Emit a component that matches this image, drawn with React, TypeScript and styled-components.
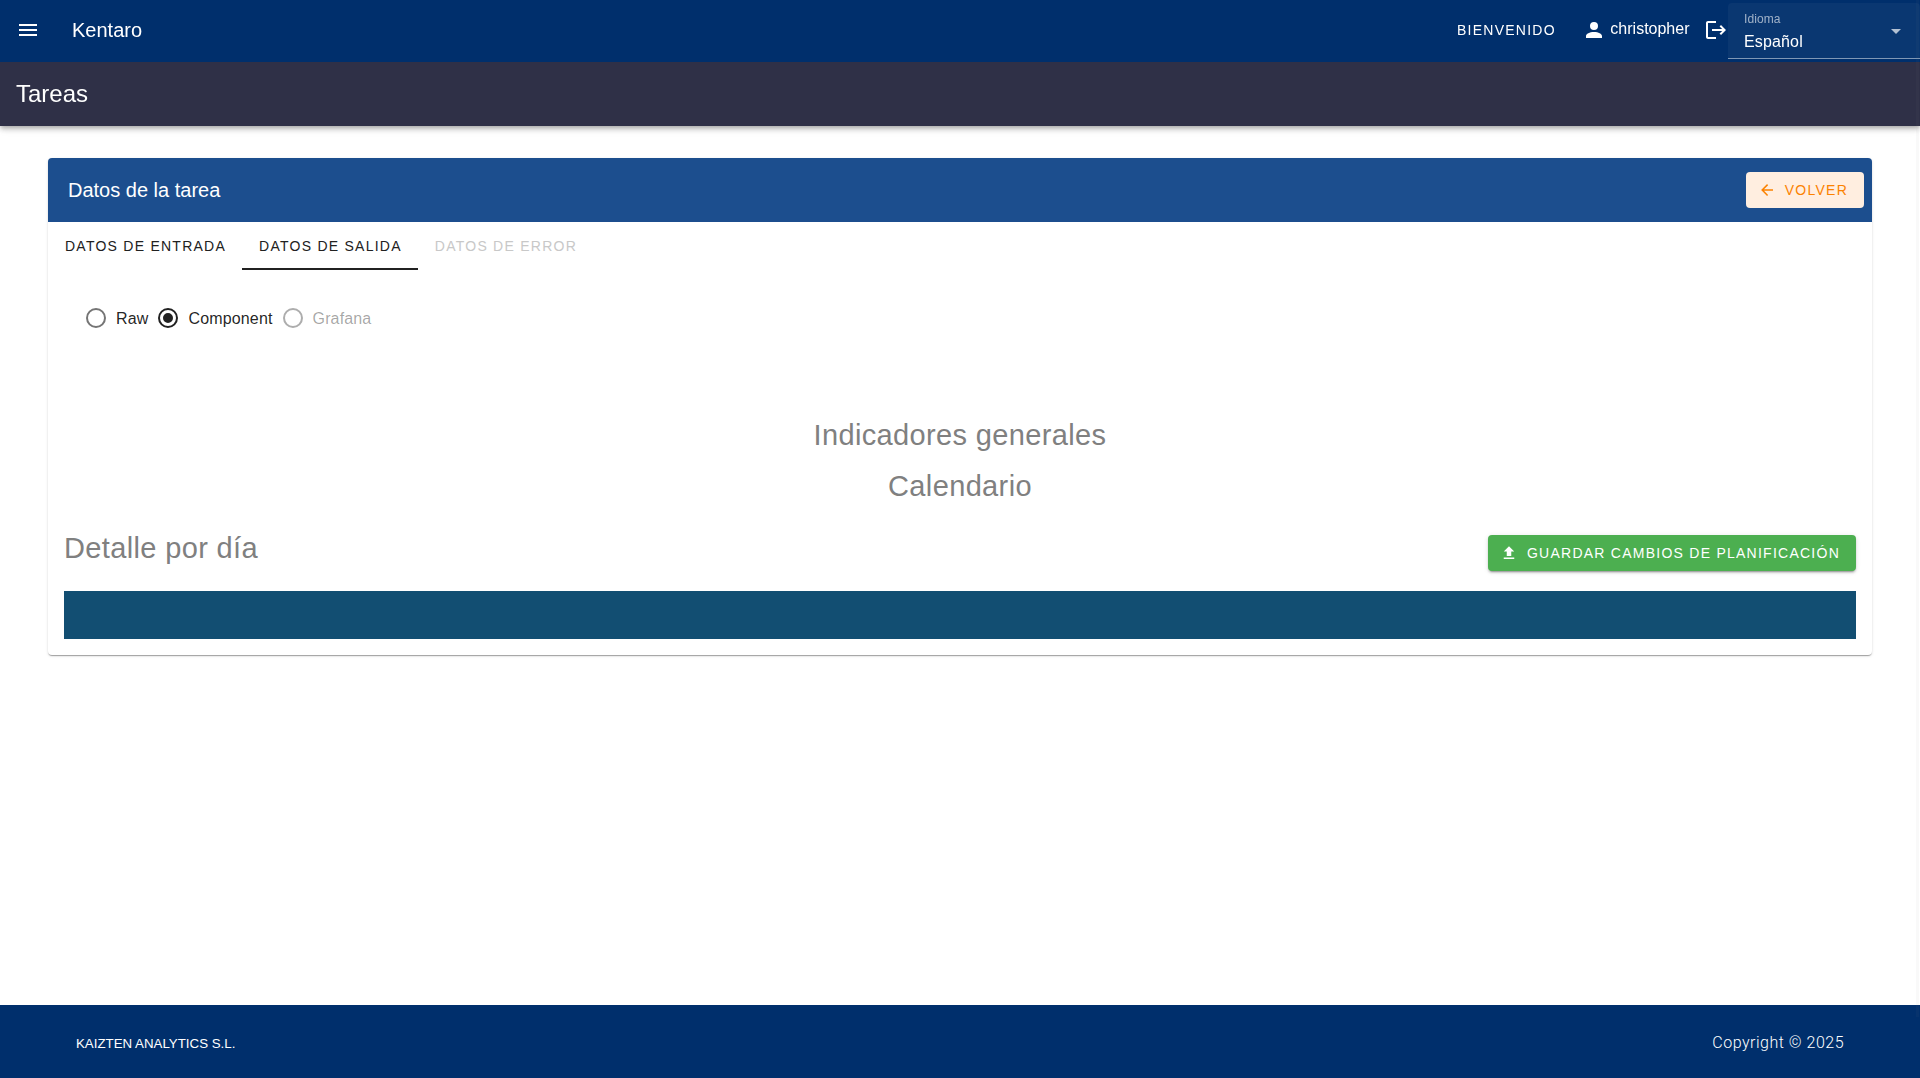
import React from "react";
import styled, { createGlobalStyle } from "styled-components";

const Global = createGlobalStyle`
  * { box-sizing: border-box; }
  body { margin: 0; background: #fff; overflow: hidden; }
  button { font-family: inherit; }
`;

const Page = styled.div`
  display: flex;
  flex-direction: column;
  height: 100vh;
  font-family: "Liberation Sans", Arial, sans-serif;
  font-size: 16px;
  line-height: 24px;
  color: rgba(0, 0, 0, 0.87);
`;

const Header = styled.header`
  position: relative;
  z-index: 1;
  flex: none;
  color: #fff;
  will-change: transform;
  box-shadow: 0 2px 4px -1px rgba(0, 0, 0, 0.2), 0 4px 5px rgba(0, 0, 0, 0.14), 0 1px 10px rgba(0, 0, 0, 0.12);
`;

const AppBar = styled.div`
  display: flex;
  align-items: center;
  height: 62px;
  padding: 0 0 2px 16px;
  background: #002f6c;
`;

const Brand = styled.div`
  margin-left: 32px;
  font-size: 20px;
`;

const Spacer = styled.div`
  flex: 1;
`;

const Welcome = styled.span`
  margin-right: 26px;
  font-size: 14px;
  letter-spacing: 1.25px;
`;

const UserName = styled.span`
  margin: 0 14.5px 2px 4.5px;
`;

const TitleBar = styled.div`
  display: flex;
  align-items: center;
  height: 64px;
  padding-left: 16px;
  font-size: 24px;
  background: #2f3047;
`;

const Select = styled.div`
  display: flex;
  align-items: center;
  justify-content: space-between;
  width: 192px;
  height: 56px;
  margin-top: 2px;
  padding: 0 12px 0 16px;
  border-radius: 4px 4px 0 0;
  border-bottom: 1px solid #7f97b5;
  background: rgba(255, 255, 255, 0.04);
`;

const SelectField = styled.div`
  display: flex;
  flex-direction: column;
  padding-top: 2px;
`;

const SelectLabel = styled.span`
  font-size: 12px;
  line-height: 20px;
  letter-spacing: 0.1px;
  color: rgba(255, 255, 255, 0.6);
`;

const SelectValue = styled.span`
  line-height: 26px;
  letter-spacing: 0.15px;
`;

const Main = styled.main`
  flex: 1;
  padding: 32px 48px;
`;

const Card = styled.section`
  height: 497px;
  border-radius: 4px;
  background: #fff;
  box-shadow: 0 2px 1px -1px rgba(0, 0, 0, 0.2), 0 1px 1px rgba(0, 0, 0, 0.14), 0 1px 3px rgba(0, 0, 0, 0.12);
`;

const CardHeader = styled.div`
  display: flex;
  align-items: center;
  justify-content: space-between;
  height: 64px;
  padding: 0 8px 0 20px;
  border-radius: 4px 4px 0 0;
  font-size: 20px;
  color: #fff;
  background: #1c4e8e;
`;

const Button = styled.button<{ $tone: "back" | "save" }>`
  display: flex;
  align-items: center;
  height: 36px;
  padding: 0 16px 0 12px;
  gap: 9px;
  border: 0;
  border-radius: 4px;
  font-size: 14px;
  letter-spacing: 1.25px;
  color: ${(p) => (p.$tone === "back" ? "#fb8200" : "#fff")};
  background: ${(p) => (p.$tone === "back" ? "#ffeee0" : "#4caf50")};
  box-shadow: ${(p) =>
    p.$tone === "back"
      ? "none"
      : "0 3px 1px -2px rgba(0,0,0,.2), 0 2px 2px rgba(0,0,0,.14), 0 1px 5px rgba(0,0,0,.12)"};
`;

const Tabs = styled.div`
  display: flex;
  height: 48px;
`;

const Tab = styled.div<{ $active?: boolean; $disabled?: boolean }>`
  display: flex;
  align-items: center;
  padding: 2px 16px 0 17px;
  border-bottom: 2px solid ${(p) => (p.$active ? "#212121" : "transparent")};
  font-size: 14px;
  letter-spacing: 1.25px;
  color: ${(p) => (p.$disabled ? "#c8c8c8" : "#212121")};
`;

const Radios = styled.div`
  display: flex;
  gap: 8px;
  padding: 36px 0 0 36px;
`;

const RadioOption = styled.label<{ $disabled?: boolean }>`
  display: flex;
  align-items: center;
  gap: 8px;
  height: 24px;
  line-height: 26px;
  letter-spacing: 0.15px;
  color: ${(p) => (p.$disabled ? "rgba(0,0,0,.36)" : "rgba(0,0,0,.87)")};
`;

const RadioText = styled.span`
  padding-top: 2px;
`;

const Headings = styled.div`
  padding-top: 80px;
  text-align: center;
`;

const Heading = styled.h2`
  margin: 0;
  font-size: 29px;
  font-weight: 400;
  line-height: 51px;
  letter-spacing: 0.36px;
  color: #808080;
`;

const DetailRow = styled.div`
  display: flex;
  align-items: flex-start;
  justify-content: space-between;
  height: 79px;
  padding: 0 16px;
`;

const DetailTitle = styled(Heading)`
  margin-top: 11px;
`;

const SaveSlot = styled.div`
  padding-top: 23px;
`;

const Band = styled.div`
  height: 48px;
  margin: 0 16px;
  background: #124e72;
`;

const Footer = styled.footer`
  display: flex;
  align-items: center;
  justify-content: space-between;
  height: 73px;
  padding: 2px 76px 0;
  color: #fff;
  background: #002f6c;
`;

const Company = styled.span`
  padding-top: 2px;
  font-size: 13.3px;
`;

const Copyright = styled.span`
  font-family: Roboto, sans-serif;
  font-weight: 300;
  letter-spacing: 0.5px;
`;

const ScrollTrack = styled.div`
  position: fixed;
  z-index: 2;
  top: 0;
  right: 1px;
  width: 3px;
  height: 1017px;
  background: rgba(128, 128, 128, 0.05);
`;

const Svg = styled.svg`
  flex: none;
  display: block;
`;

const paths = {
  menu: "M3 6H21V8H3V6M3 11H21V13H3V11M3 16H21V18H3V16Z",
  account:
    "M12 4A4 4 0 0 1 16 8A4 4 0 0 1 12 12A4 4 0 0 1 8 8A4 4 0 0 1 12 4M12 14C16.42 14 20 15.79 20 18V20H4V18C4 15.79 7.58 14 12 14Z",
  logout:
    "M17 7L15.59 8.41L18.17 11H8V13H18.17L15.59 15.58L17 17L22 12M4 5H12V3H4C2.9 3 2 3.9 2 5V19C2 20.1 2.9 21 4 21H12V19H4V5Z",
  down: "M7 10L12 15L17 10H7Z",
  back: "M20 11V13H8L13.5 18.5L12.08 19.92L4.16 12L12.08 4.08L13.5 5.5L8 11H20Z",
  upload: "M9 16V10H5L12 3L19 10H15V16H9M5 20V18H19V20H5Z",
  radioOff:
    "M12 20A8 8 0 0 1 4 12A8 8 0 0 1 12 4A8 8 0 0 1 20 12A8 8 0 0 1 12 20M12 2A10 10 0 0 0 2 12A10 10 0 0 0 12 22A10 10 0 0 0 22 12A10 10 0 0 0 12 2Z",
  radioOn:
    "M12 20A8 8 0 0 1 4 12A8 8 0 0 1 12 4A8 8 0 0 1 20 12A8 8 0 0 1 12 20M12 2A10 10 0 0 0 2 12A10 10 0 0 0 12 22A10 10 0 0 0 22 12A10 10 0 0 0 12 2M12 7A5 5 0 0 0 7 12A5 5 0 0 0 12 17A5 5 0 0 0 17 12A5 5 0 0 0 12 7Z",
};

function Icon({ name, size = 24, color = "currentColor" }: { name: keyof typeof paths; size?: number; color?: string }) {
  return (
    <Svg width={size} height={size} viewBox="0 0 24 24" fill={color} aria-hidden="true">
      <path d={paths[name]} />
    </Svg>
  );
}

export default function App() {
  return (
    <Page>
      <Global />
      <Header>
        <AppBar>
          <Icon name="menu" />
          <Brand>Kentaro</Brand>
          <Spacer />
          <Welcome>BIENVENIDO</Welcome>
          <Icon name="account" />
          <UserName>christopher</UserName>
          <Icon name="logout" />
          <Select>
            <SelectField>
              <SelectLabel>Idioma</SelectLabel>
              <SelectValue>Español</SelectValue>
            </SelectField>
            <Icon name="down" color="#b3c1d3" />
          </Select>
        </AppBar>
        <TitleBar>Tareas</TitleBar>
      </Header>
      <Main>
        <Card>
          <CardHeader>
            <span>Datos de la tarea</span>
            <Button $tone="back">
              <Icon name="back" size={18} />
              VOLVER
            </Button>
          </CardHeader>
          <Tabs>
            <Tab>DATOS DE ENTRADA</Tab>
            <Tab $active>DATOS DE SALIDA</Tab>
            <Tab $disabled>DATOS DE ERROR</Tab>
          </Tabs>
          <Radios>
            <RadioOption>
              <Icon name="radioOff" color="#757575" />
              <RadioText>Raw</RadioText>
            </RadioOption>
            <RadioOption>
              <Icon name="radioOn" color="#212121" />
              <RadioText>Component</RadioText>
            </RadioOption>
            <RadioOption $disabled>
              <Icon name="radioOff" color="#adadad" />
              <RadioText>Grafana</RadioText>
            </RadioOption>
          </Radios>
          <Headings>
            <Heading>Indicadores generales</Heading>
            <Heading>Calendario</Heading>
          </Headings>
          <DetailRow>
            <DetailTitle>Detalle por día</DetailTitle>
            <SaveSlot>
              <Button $tone="save">
                <Icon name="upload" size={18} />
                GUARDAR CAMBIOS DE PLANIFICACIÓN
              </Button>
            </SaveSlot>
          </DetailRow>
          <Band />
        </Card>
      </Main>
      <Footer>
        <Company>KAIZTEN ANALYTICS S.L.</Company>
        <Copyright>Copyright © 2025</Copyright>
      </Footer>
      <ScrollTrack />
    </Page>
  );
}
